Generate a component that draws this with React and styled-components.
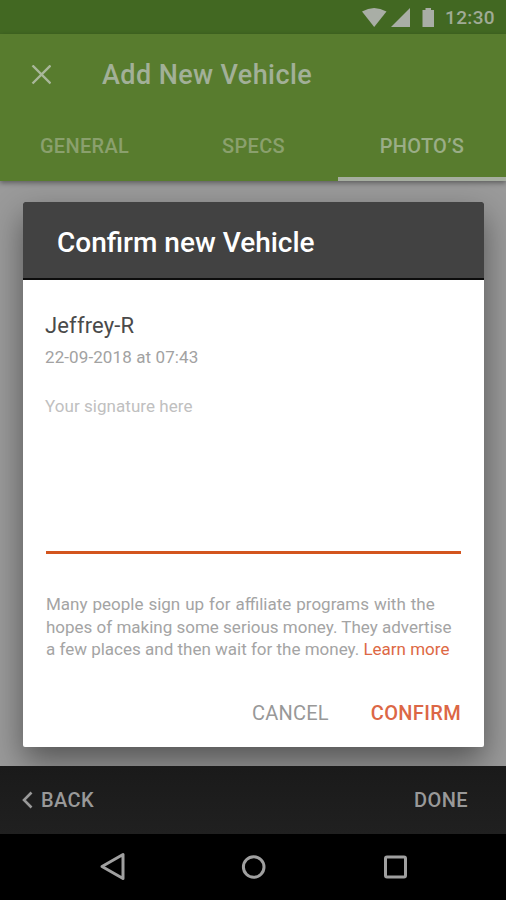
import React from 'react';
import styled, { createGlobalStyle } from 'styled-components';

const GlobalStyle = createGlobalStyle`
  * {
    box-sizing: border-box;
  }

  body {
    margin: 0;
    font-family: Roboto, sans-serif;
    background-color: #000;
  }
`;

const Screen = styled.div`
  display: flex;
  flex-direction: column;
  width: 506px;
  height: 900px;
  overflow: hidden;
`;

const StatusBar = styled.div`
  display: flex;
  align-items: center;
  justify-content: flex-end;
  height: 34px;
  padding-right: 11px;
  background-color: #426822;
  color: #a0ab96;
`;

const StatusIcons = styled.svg`
  display: block;
  width: 76px;
  height: 34px;
  margin-right: 8px;
  fill: #a9aea6;
`;

const Clock = styled.span`
  font-size: 19px;
  font-weight: 500;
  letter-spacing: 0.35px;
  line-height: 35px;
`;

const Header = styled.header`
  position: relative;
  z-index: 1;
  height: 147px;
  background-color: #587c2e;
  box-shadow: 0 2px 5px rgba(0, 0, 0, 0.4);
`;

const TitleRow = styled.div`
  display: flex;
  align-items: center;
  height: 82px;
  padding-left: 31px;
`;

const CloseIcon = styled.svg`
  width: 20px;
  height: 20px;
  margin-right: 51px;
  stroke: #a9b79a;
  stroke-width: 2.4;
`;

const PageTitle = styled.h1`
  margin: 0;
  font-size: 27px;
  font-weight: 500;
  line-height: 83px;
  letter-spacing: 0.4px;
  color: #a2b098;
`;

const Tabs = styled.nav`
  display: grid;
  grid-template-columns: 169px 169px 168px;
  height: 65px;
`;

const Tab = styled.div`
  padding-top: 18px;
  text-align: center;
  font-size: 20px;
  font-weight: 500;
  line-height: 24px;
  letter-spacing: 0.3px;
  color: ${(props) => (props.$active ? '#9aad87' : '#8aa06d')};
  border-bottom: 4px solid ${(props) => (props.$active ? '#a6aea0' : 'transparent')};
`;

const Content = styled.main`
  position: relative;
  height: 585px;
  padding: 21px 22px 19px 23px;
  background-color: #9a9a9a;
  overflow: hidden;
`;

const Dialog = styled.section`
  display: flex;
  flex-direction: column;
  height: 545px;
  border-radius: 2px;
  background-color: #fff;
  box-shadow: 0 14px 32px rgba(0, 0, 0, 0.45);
`;

const DialogTitle = styled.h2`
  height: 78px;
  margin: 0;
  padding-left: 34px;
  border-bottom: 2px solid #0c0c0c;
  border-radius: 2px 2px 0 0;
  background-color: #424242;
  color: #fff;
  font-size: 28px;
  font-weight: 500;
  line-height: 81px;
`;

const DialogBody = styled.div`
  padding: 32px 23px 0 22px;
`;

const SignerName = styled.div`
  font-size: 22px;
  line-height: 28px;
  letter-spacing: 0.15px;
  color: #4a4a4a;
`;

const SignedAt = styled.div`
  margin-top: 5px;
  font-size: 17px;
  line-height: 24px;
  letter-spacing: 0.1px;
  color: #a2a2a2;
`;

const SignatureField = styled.div`
  height: 160px;
  margin: 25px 0 0 1px;
  border-bottom: 3px solid #d3551e;
  font-size: 17px;
  line-height: 24px;
  text-indent: -1px;
  letter-spacing: 0.05px;
  color: #c0c0c0;
`;

const Terms = styled.p`
  margin: 39px 0 0 1px;
  font-size: 17px;
  line-height: 22.5px;
  color: #a4a4a4;
  white-space: nowrap;

  &::first-line {
    word-spacing: 0.75px;
  }
`;

const TermsLink = styled.span`
  color: #dd6844;
`;

const Actions = styled.div`
  display: flex;
  justify-content: flex-end;
  gap: 42px;
  margin-top: 39px;
`;

const ActionButton = styled.button`
  padding: 0;
  border: 0;
  background: none;
  font-family: inherit;
  font-size: 20px;
  font-weight: ${(props) => (props.$primary ? 500 : 400)};
  line-height: 26px;
  letter-spacing: ${(props) => (props.$primary ? '0.35px' : '0.2px')};
  color: ${(props) => (props.$primary ? '#dc6746' : '#989898')};
`;

const Footer = styled.footer`
  display: flex;
  align-items: center;
  justify-content: space-between;
  height: 68px;
  padding: 0 38px 0 22px;
  background: linear-gradient(#1a1a1a, #202020);
`;

const FooterButton = styled.button`
  display: flex;
  align-items: center;
  gap: 8px;
  padding: 0;
  border: 0;
  background: none;
  font-family: inherit;
  font-size: 20px;
  font-weight: 500;
  line-height: 26px;
  letter-spacing: 0.4px;
  color: #999;
`;

const BackArrow = styled.svg`
  width: 11px;
  height: 18px;
  fill: none;
  stroke: #999;
  stroke-width: 2.6;
`;

const NavigationBar = styled.div`
  display: flex;
  align-items: center;
  justify-content: space-between;
  height: 66px;
  padding: 0 95px 0 98px;
  background-color: #000;
`;

const NavIcon = styled.svg`
  width: 30px;
  height: 30px;
  fill: none;
  stroke: #a0a0a0;
  stroke-width: 3;
  stroke-linejoin: round;
`;

const App = () => {
  return (
    <>
      <GlobalStyle />
      <Screen>
        <StatusBar>
          <StatusIcons viewBox="0 0 76 34">
            <path d="M1 11.5Q13 4.500 25.500 11.500L13.200 27Z" />
            <path d="M49 8V27H30Z" />
            <path d="M61.500 10H64.500V8H70V10H73V27H61.500Z" />
          </StatusIcons>
          <Clock>12:30</Clock>
        </StatusBar>
        <Header>
          <TitleRow>
            <CloseIcon viewBox="0 0 20 20">
              <path d="M1.500 0.500L19.500 18.500M19.500 0.500L1.500 18.500" />
            </CloseIcon>
            <PageTitle>Add New Vehicle</PageTitle>
          </TitleRow>
          <Tabs>
            <Tab>GENERAL</Tab>
            <Tab>SPECS</Tab>
            <Tab $active>PHOTO’S</Tab>
          </Tabs>
        </Header>
        <Content>
          <Dialog>
            <DialogTitle>Confirm new Vehicle</DialogTitle>
            <DialogBody>
              <SignerName>Jeffrey-R</SignerName>
              <SignedAt>22-09-2018 at 07:43</SignedAt>
              <SignatureField>Your signature here</SignatureField>
              <Terms>
                Many people sign up for affiliate programs with the
                <br />
                hopes of making some serious money. They advertise
                <br />
                a few places and then wait for the money. <TermsLink>Learn more</TermsLink>
              </Terms>
              <Actions>
                <ActionButton>CANCEL</ActionButton>
                <ActionButton $primary>CONFIRM</ActionButton>
              </Actions>
            </DialogBody>
          </Dialog>
        </Content>
        <Footer>
          <FooterButton>
            <BackArrow viewBox="0 0 11 18">
              <path d="M9.500 1.500L2 9L9.500 16.500" />
            </BackArrow>
            BACK
          </FooterButton>
          <FooterButton>DONE</FooterButton>
        </Footer>
        <NavigationBar>
          <NavIcon viewBox="0 0 30 30">
            <path d="M4 14.500L25 2.500V26.500Z" />
          </NavIcon>
          <NavIcon viewBox="0 0 30 30">
            <circle cx="13.700" cy="15" r="10.300" />
          </NavIcon>
          <NavIcon viewBox="0 0 30 30">
            <rect x="4.500" y="5" width="20" height="20" rx="1.500" />
          </NavIcon>
        </NavigationBar>
      </Screen>
    </>
  );
};

export default App;
